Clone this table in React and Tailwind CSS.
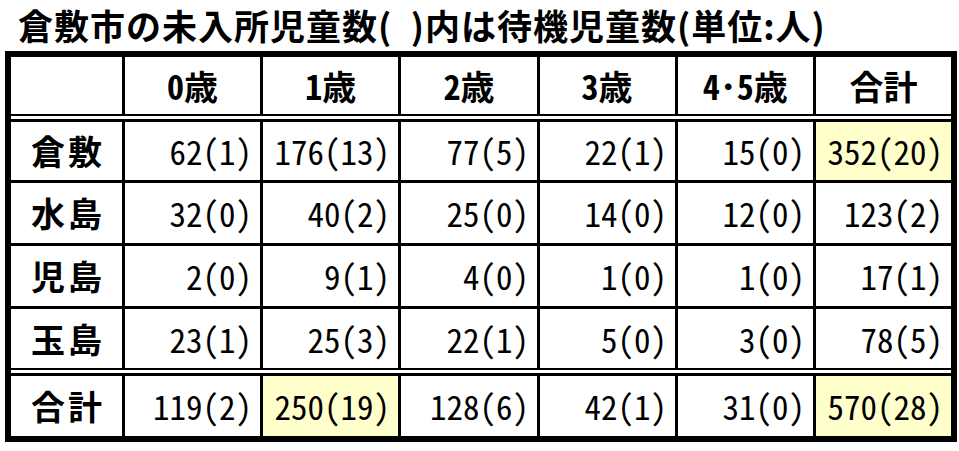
import React from "react";

const headers = ["0歳", "1歳", "2歳", "3歳", "4･5歳", "合計"];

const rows = [
  { label: "倉敷", h: "h-[58px]", cells: ["62(1)", "176(13)", "77(5)", "22(1)", "15(0)", "352(20)"], marks: [5] },
  { label: "水島", h: "h-[60px]", cells: ["32(0)", "40(2)", "25(0)", "14(0)", "12(0)", "123(2)"], marks: [] },
  { label: "児島", h: "h-[60px]", cells: ["2(0)", "9(1)", "4(0)", "1(0)", "1(0)", "17(1)"], marks: [] },
  { label: "玉島", h: "h-[59px]", cells: ["23(1)", "25(3)", "22(1)", "5(0)", "3(0)", "78(5)"], marks: [] },
];

const total = { label: "合計", h: "h-[60px]", cells: ["119(2)", "250(19)", "128(6)", "42(1)", "31(0)", "570(28)"], marks: [1, 5] };

const DoubleLine = () => (
  <div className="flex flex-col">
    <div className="h-[2px] bg-black" />
    <div className="h-[3px] bg-white" />
    <div className="h-[3px] bg-black" />
  </div>
);

const Row = ({ row }) => (
  <div className={`grid grid-cols-[111px_repeat(6,1fr)] gap-x-[3px] bg-black ${row.h}`}>
    <div className="bg-white flex items-center justify-center pl-[3px] text-[34px] font-bold leading-none tracking-[3px]">
      {row.label}
    </div>
    {row.cells.map((c, i) => (
      <div
        key={i}
        className={`${row.marks.includes(i) ? "bg-[#ffffcc]" : "bg-white"} flex items-center justify-end pr-[8px] text-[34px] leading-none whitespace-nowrap`}
      >
        <span className="inline-block origin-right scale-x-[0.97] [font-feature-settings:'hwid']">{c}</span>
      </div>
    ))}
  </div>
);

export default function App() {
  return (
    <div className="w-[959px] h-[451px] bg-white text-black font-['Noto_Sans_CJK_JP',sans-serif] flex flex-col">
      <div className="h-[51px] shrink-0 pt-[5px] pl-[18px] text-[35px] font-bold leading-[40px] tracking-[1px] whitespace-nowrap">
        倉敷市の未入所児童数(&#8194;)内は待機児童数(単位:人)
      </div>
      <div className="ml-[5px] w-[952px] border-[6px] border-black flex flex-col">
        <div className="grid grid-cols-[111px_repeat(6,1fr)] gap-x-[3px] bg-black h-[57px]">
          <div className="bg-white" />
          {headers.map((h) => (
            <div key={h} className="bg-white flex items-center justify-center text-[34px] font-bold leading-none [font-feature-settings:'hwid']">
              {h}
            </div>
          ))}
        </div>
        <DoubleLine />
        {rows.map((r, i) => (
          <React.Fragment key={r.label}>
            {i > 0 && <div className="h-[3px] bg-black" />}
            <Row row={r} />
          </React.Fragment>
        ))}
        <DoubleLine />
        <Row row={total} />
      </div>
    </div>
  );
}
